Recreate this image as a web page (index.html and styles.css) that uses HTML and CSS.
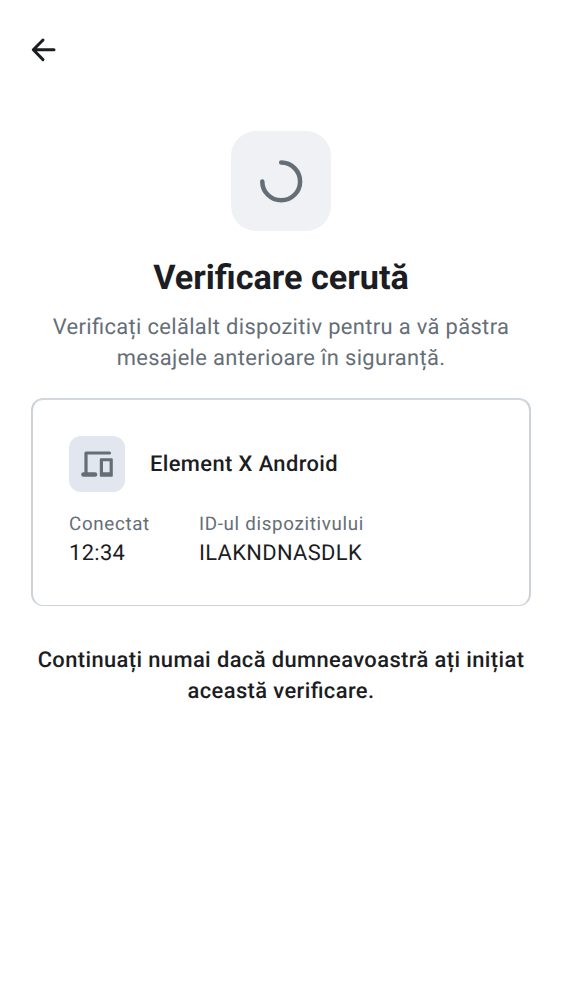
FILE: index.html
```html
<!DOCTYPE html>
<html lang="ro">
<head>
<meta charset="utf-8">
<title>Verificare cerută</title>
<link rel="stylesheet" href="styles.css">
</head>
<body>
<header class="topbar">
  <svg class="back" viewBox="0 0 37 37" width="37" height="37"><path d="M29 18.8H9M18 9L8.3 18.8L18 28.6" fill="none" stroke="currentColor" stroke-width="3" stroke-linecap="round" stroke-linejoin="round"/></svg>
</header>
<main class="content">
  <div class="hero">
    <svg width="50" height="50" viewBox="0 0 50 50"><path d="M25.2 6.5A18.9 18.9 0 1 1 6.3 25.4" fill="none" stroke="currentColor" stroke-width="4.5" stroke-linecap="round"/></svg>
  </div>
  <h1 class="title"><span>Verificare cerută</span></h1>
  <p class="subtitle"><span>Verificați celălalt dispozitiv pentru a vă păstra</span><br><span>mesajele anterioare în siguranță.</span></p>
  <section class="card">
    <div class="device">
      <div class="device-icon">
        <svg width="56" height="56" viewBox="0 0 56 56" fill="none" stroke="currentColor"><path d="M17 37V17H40.5" stroke-width="3.2" stroke-linecap="round" stroke-linejoin="round"/><path d="M14.5 38.5H26" stroke-width="4.6" stroke-linecap="round"/><path d="M31.8 22.2H42.8Q43.8 22.2 43.8 23.2V39.8Q43.8 40.8 42.8 40.8H31.8Q30.8 40.8 30.8 39.8V23.2Q30.8 22.2 31.8 22.2ZM34 25.3V36.2H40.6V25.3Z" fill="currentColor" fill-rule="evenodd" stroke="none"/></svg>
      </div>
      <span class="device-name">Element X Android</span>
    </div>
    <dl class="details">
      <div><dt>Conectat</dt><dd>12:34</dd></div>
      <div><dt>ID-ul dispozitivului</dt><dd>ILAKNDNASDLK</dd></div>
    </dl>
  </section>
  <p class="notice"><span>Continuați numai dacă dumneavoastră ați inițiat</span><br><span>această verificare.</span></p>
</main>
</body>
</html>
```
FILE: styles.css
```css
body { margin: 0; background: #fff; color: #1b1d22; font-family: Roboto, sans-serif; text-rendering: geometricPrecision; font-feature-settings: "liga" 1; }
.topbar { height: 69px; padding: 31px 0 0 25px; }
.back { display: block; }
.content { padding: 31px 31px 0; text-align: center; }
.hero { width: 100px; height: 100px; margin: 0 auto; border-radius: 25px; background: #f0f1f5; color: #656e77; display: flex; align-items: center; justify-content: center; }
.title { margin: 26px 0 0; font-size: 34.2px; line-height: 43px; font-weight: 700; }
.subtitle { margin: 12px 0 0; font-size: 21.9px; line-height: 31px; letter-spacing: .35px; color: #656e77; white-space: nowrap; }
.card { box-sizing: border-box; height: 208px; margin-top: 24px; padding: 36px; border: 2px solid #cdd3da; border-top-color: #d2d7df; border-bottom-width: 1px; border-radius: 12px; text-align: left; }
.device { display: flex; align-items: center; gap: 25px; }
.device-icon { width: 56px; height: 56px; border-radius: 12px; background: #e2e6ef; color: #656e77; }
.device-icon svg { display: block; }
.device-name { font-size: 21.9px; font-weight: 500; letter-spacing: .4px; }
.details { display: flex; gap: 49px; margin: 20px 0 0; }
.details dt { font-size: 18.75px; line-height: 25px; letter-spacing: .68px; color: #656e77; }
.details dd { margin: 1px 0 0; font-size: 21.9px; line-height: 31px; letter-spacing: .35px; }
.notice { margin: 39px 0 0; font-size: 21.9px; line-height: 31px; font-weight: 500; letter-spacing: .4px; white-space: nowrap; }
```
